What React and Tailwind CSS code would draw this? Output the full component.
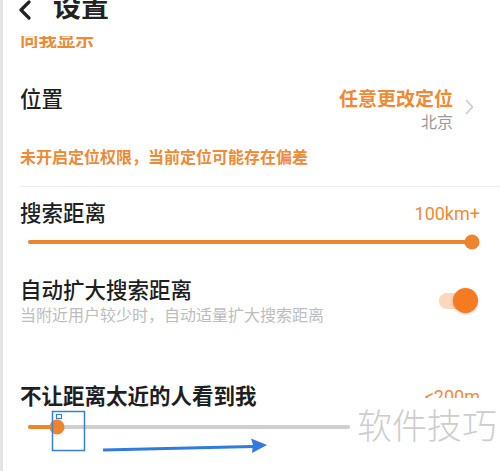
const Slider = ({ percent, className }) => (
  <div className={`relative h-[4px] rounded-full bg-[#cfcfcf] ${className}`}>
    <div className="absolute left-0 top-0 h-[4px] rounded-full bg-[#f0842c]" style={{ width: `${percent}%` }} />
    <div
      className="absolute top-1/2 h-[15px] w-[15px] -translate-x-1/2 -translate-y-1/2 rounded-full bg-[#f0842c]"
      style={{ left: `${percent}%` }}
    />
  </div>
);

const Title = ({ children, bold }) => (
  <div className={`text-[21.5px] leading-[24px] text-[#1f1f1f] ${bold ? 'font-bold' : 'font-medium'}`}>{children}</div>
);

export default function App() {
  return (
    <div
      className="relative h-[471px] w-[500px] overflow-hidden border-l-[3px] border-[#e3e3e3] bg-white"
      style={{ fontFamily: 'Roboto, "Noto Sans CJK SC", sans-serif' }}
    >
      {/* header */}
      <div className="flex h-[32px] items-end overflow-hidden pl-[14px]">
        <div className="flex items-center gap-[20px] pb-[8px]">
          <svg width="16" height="20" viewBox="0 0 16 20" className="mt-[4px] text-[#222]">
            <path d="M12 2 L4 10 L12 18" fill="none" stroke="currentColor" strokeWidth="3.2" strokeLinecap="round" strokeLinejoin="round" />
          </svg>
          <span className="text-[28px] leading-[32px] font-bold text-[#222]">设置</span>
        </div>
      </div>

      {/* clipped line under header */}
      <div className="mt-[4px] flex h-[12px] items-end overflow-hidden pl-[17px]">
        <span className="mb-[-3px] text-[18.5px] leading-[20px] font-bold text-[#ef8a34]">向我显示</span>
      </div>

      {/* location */}
      <div className="mt-[40px] flex items-start justify-between pl-[17px] pr-[26px]">
        <Title>位置</Title>
        <div className="flex items-center gap-[12px]">
          <div className="flex flex-col items-end">
            <span className="text-[19px] leading-[24px] font-bold text-[#ef8a34]">任意更改定位</span>
            <span className="mt-[2px] text-[16px] leading-[18px] text-[#9a9a9a]">北京</span>
          </div>
          <svg width="9" height="16" viewBox="0 0 9 16" className="mb-[6px]">
            <path d="M1.5 1.5 L7.5 8 L1.5 14.5" fill="none" stroke="#c9c9c9" strokeWidth="1.6" strokeLinecap="round" strokeLinejoin="round" />
          </svg>
        </div>
      </div>
      <div className="mt-[16px] pl-[17px] text-[16px] leading-[20px] font-bold text-[#ef8a34]">
        未开启定位权限，当前定位可能存在偏差
      </div>

      <div className="ml-[17px] mt-[18px] h-[1px] bg-[#ececec]" />

      {/* search distance */}
      <div className="mt-[15px] flex items-center justify-between pl-[17px] pr-[20px]">
        <Title>搜索距离</Title>
        <span className="text-[18px] leading-[20px] text-[#ef8a34]">100km+</span>
      </div>
      <div className="mt-[14px]">
        <Slider percent={100} className="ml-[25px] mr-[28px]" />
      </div>

      {/* auto expand */}
      <div className="mt-[35px] flex items-start justify-between pl-[17px] pr-[22px]">
        <div>
          <Title>自动扩大搜索距离</Title>
          <div className="mt-[4px] text-[16px] leading-[18px] text-[#bdbdbd]">当附近用户较少时，自动适量扩大搜索距离</div>
        </div>
        <div className="relative mt-[9px] h-[25px] w-[40px]">
          <div className="absolute left-[1px] top-[5px] h-[16px] w-[34px] rounded-full bg-[#fbd8bc]" />
          <div className="absolute right-[0px] top-0 h-[25px] w-[25px] rounded-full bg-[#f57b20] shadow-[0_1px_3px_rgba(0,0,0,0.25)]" />
        </div>
      </div>

      {/* hide from nearby */}
      <div className="mt-[60px] flex items-start justify-between pl-[17px] pr-[20px]">
        <Title bold>不让距离太近的人看到我</Title>
        <div className="mt-[3px] h-[10px] overflow-hidden">
          <span className="block text-[18px] leading-[18px] text-[#ef8a34]">&lt;200m</span>
        </div>
      </div>
      <div className="mt-[16px]">
        <Slider percent={9} className="ml-[25px] w-[322px]" />
      </div>

      {/* watermark */}
      <div className="absolute left-[354px] top-[406px] whitespace-nowrap text-[35px] leading-[44px] font-light text-[#cdcdcd]">
        软件技巧
      </div>

      {/* annotation */}
      <svg className="absolute left-0 top-0" width="500" height="471" viewBox="0 0 500 471">
        <rect x="49.5" y="411.5" width="32" height="39" fill="none" stroke="#3a7fd6" strokeWidth="1.5" />
        <rect x="53.5" y="414.5" width="5" height="4" fill="none" stroke="#3a7fd6" strokeWidth="1.2" />
        <path d="M100 448.5 L250 445 L248 438.5 L264 445 L249 453 L249.5 448 L100 451.5 Z" fill="#2f7be0" />
      </svg>
    </div>
  );
}
